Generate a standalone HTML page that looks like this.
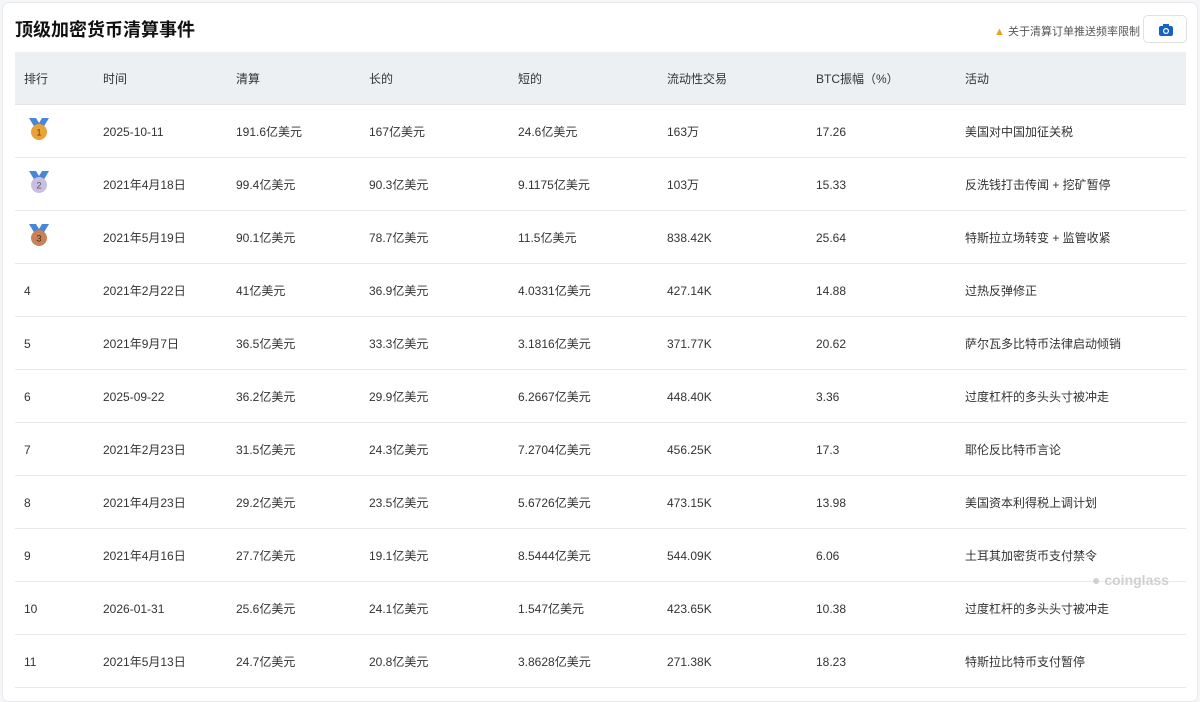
<!DOCTYPE html>
<html><head><meta charset="utf-8"><style>
*{margin:0;padding:0;box-sizing:border-box}
body{width:1200px;height:682px;overflow:hidden;background:#f5f6f8;font-family:"Liberation Sans","Noto Sans CJK SC",sans-serif;color:#333}
.card{position:absolute;left:2px;top:2px;width:1196px;height:700px;background:#fff;border:1px solid #e8e9ec;border-radius:6px}
h1{position:absolute;left:15px;top:16px;font-size:18px;font-weight:bold;color:#111}
.warn{position:absolute;left:994px;top:23px;font-size:11px;color:#555}
.cam{position:absolute;left:1143px;top:15px;width:44px;height:28px;border:1px solid #dfe1e5;border-radius:5px;background:#fff}
table{position:absolute;left:15px;top:52px;width:1171px;border-collapse:collapse;font-size:12px}
th{background:#edf0f3;height:52px;text-align:left;font-weight:normal;color:#333;border-bottom:1px solid #e3e5e8;padding-top:2px}
td{height:53px;border-bottom:1px solid #e8e9ec;color:#333;padding-top:2px}
.c0{padding-left:9px;width:88px}.c1{width:133px}.c2{width:133px}.c3{width:149px}.c4{width:149px}.c5{width:149px}.c6{width:149px}
td.m{padding-left:12px;padding-top:0}
.wm{position:absolute;left:1092px;top:572px;font-size:14px;color:#d0d0d0;font-weight:bold}
</style></head><body>
<div class="card"></div>
<h1>顶级加密货币清算事件</h1>
<div class="warn"><span style="color:#f0a020">▲</span> 关于清算订单推送频率限制</div>
<div class="cam"><svg width="44" height="28" viewBox="0 0 44 28"><rect x="15" y="10" width="14" height="10" rx="2" fill="#1565c0"/><rect x="19" y="8" width="6" height="3" fill="#1565c0"/><circle cx="22" cy="15" r="3" fill="#fff"/><circle cx="22" cy="15" r="1.8" fill="#1565c0"/></svg></div>
<table>
<tr><th class="c0">排行</th><th class="c1">时间</th><th class="c2">清算</th><th class="c3">长的</th><th class="c4">短的</th><th class="c5">流动性交易</th><th class="c6">BTC振幅（%）</th><th>活动</th></tr>
<tr><td class="c0 m"><svg width="24" height="26" viewBox="0 0 24 26"><path d="M2 2l7 0 3 5 3-5 7 0-6 10h-8z" fill="#4a86d8"/><circle cx="12" cy="16" r="8" fill="#e8a23a"/><text x="12" y="19.5" font-size="9" text-anchor="middle" fill="#6a3a00">1</text></svg></td><td>2025-10-11</td><td>191.6亿美元</td><td>167亿美元</td><td>24.6亿美元</td><td>163万</td><td>17.26</td><td>美国对中国加征关税</td></tr>
<tr><td class="c0 m"><svg width="24" height="26" viewBox="0 0 24 26"><path d="M2 2l7 0 3 5 3-5 7 0-6 10h-8z" fill="#4a86d8"/><circle cx="12" cy="16" r="8" fill="#c9bfe0"/><text x="12" y="19.5" font-size="9" text-anchor="middle" fill="#555">2</text></svg></td><td>2021年4月18日</td><td>99.4亿美元</td><td>90.3亿美元</td><td>9.1175亿美元</td><td>103万</td><td>15.33</td><td>反洗钱打击传闻 + 挖矿暂停</td></tr>
<tr><td class="c0 m"><svg width="24" height="26" viewBox="0 0 24 26"><path d="M2 2l7 0 3 5 3-5 7 0-6 10h-8z" fill="#4a86d8"/><circle cx="12" cy="16" r="8" fill="#c7825a"/><text x="12" y="19.5" font-size="9" text-anchor="middle" fill="#4a2a10">3</text></svg></td><td>2021年5月19日</td><td>90.1亿美元</td><td>78.7亿美元</td><td>11.5亿美元</td><td>838.42K</td><td>25.64</td><td>特斯拉立场转变 + 监管收紧</td></tr>
<tr><td class="c0">4</td><td>2021年2月22日</td><td>41亿美元</td><td>36.9亿美元</td><td>4.0331亿美元</td><td>427.14K</td><td>14.88</td><td>过热反弹修正</td></tr>
<tr><td class="c0">5</td><td>2021年9月7日</td><td>36.5亿美元</td><td>33.3亿美元</td><td>3.1816亿美元</td><td>371.77K</td><td>20.62</td><td>萨尔瓦多比特币法律启动倾销</td></tr>
<tr><td class="c0">6</td><td>2025-09-22</td><td>36.2亿美元</td><td>29.9亿美元</td><td>6.2667亿美元</td><td>448.40K</td><td>3.36</td><td>过度杠杆的多头头寸被冲走</td></tr>
<tr><td class="c0">7</td><td>2021年2月23日</td><td>31.5亿美元</td><td>24.3亿美元</td><td>7.2704亿美元</td><td>456.25K</td><td>17.3</td><td>耶伦反比特币言论</td></tr>
<tr><td class="c0">8</td><td>2021年4月23日</td><td>29.2亿美元</td><td>23.5亿美元</td><td>5.6726亿美元</td><td>473.15K</td><td>13.98</td><td>美国资本利得税上调计划</td></tr>
<tr><td class="c0">9</td><td>2021年4月16日</td><td>27.7亿美元</td><td>19.1亿美元</td><td>8.5444亿美元</td><td>544.09K</td><td>6.06</td><td>土耳其加密货币支付禁令</td></tr>
<tr><td class="c0">10</td><td>2026-01-31</td><td>25.6亿美元</td><td>24.1亿美元</td><td>1.547亿美元</td><td>423.65K</td><td>10.38</td><td>过度杠杆的多头头寸被冲走</td></tr>
<tr><td class="c0">11</td><td>2021年5月13日</td><td>24.7亿美元</td><td>20.8亿美元</td><td>3.8628亿美元</td><td>271.38K</td><td>18.23</td><td>特斯拉比特币支付暂停</td></tr>
</table>
<div class="wm">● coinglass</div>
</body></html>
